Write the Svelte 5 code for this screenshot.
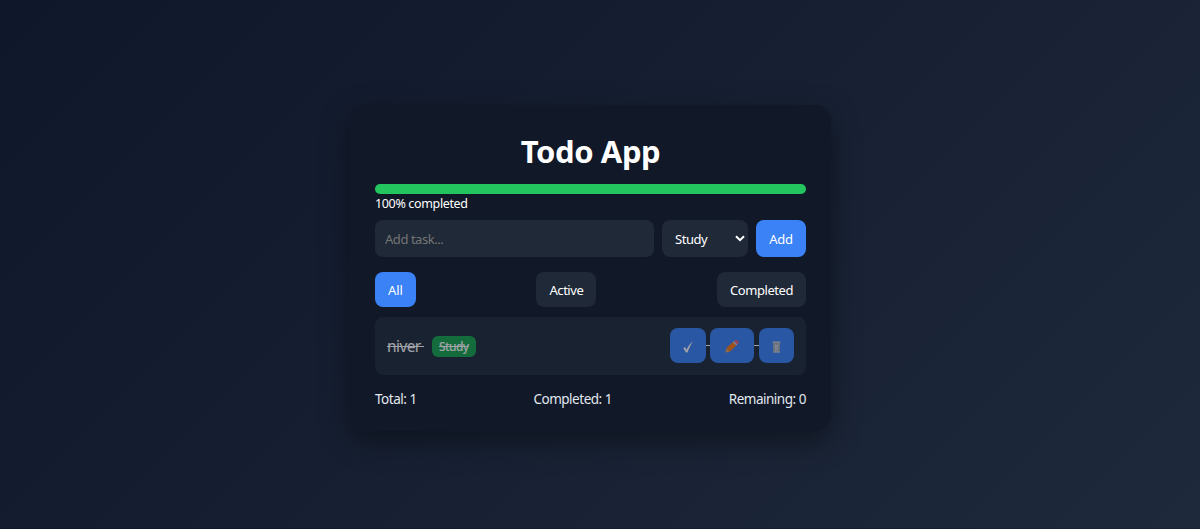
<script lang="ts">
  type Task = { id: number; text: string; category: string; done: boolean };

  let tasks: Task[] = $state([{ id: 1, text: "niver", category: "Study", done: true }]);
  let newTask = $state("");
  let category = $state("Study");
  let filter = $state("All");

  const filters = ["All", "Active", "Completed"];

  let completed = $derived(tasks.filter((t) => t.done).length);
  let progress = $derived(tasks.length ? Math.round((completed / tasks.length) * 100) : 0);
  let visible = $derived(
    tasks.filter((t) => filter === "All" || (filter === "Completed" ? t.done : !t.done))
  );

  function addTask() {
    if (!newTask.trim()) return;
    tasks.push({ id: Date.now(), text: newTask, category, done: false });
    newTask = "";
  }

  function editTask(task: Task) {
    const text = prompt("Edit task", task.text);
    if (text) task.text = text;
  }

  function deleteTask(id: number) {
    tasks = tasks.filter((t) => t.id !== id);
  }
</script>

<div class="page">
  <div class="container">
    <h1>Todo App</h1>

    <div class="progress">
      <div class="bar" style="width: {progress}%"></div>
    </div>
    <p class="percent">{progress}% completed</p>

    <div class="inputRow">
      <input bind:value={newTask} type="text" placeholder="Add task..." />
      <div class="selectBox">
        <select bind:value={category}>
          <option>Study</option>
          <option>Work</option>
          <option>Personal</option>
        </select>
        <svg width="10" height="7" viewBox="0 0 10 7"><path d="M1 1.2 L5 5.2 L9 1.2" /></svg>
      </div>
      <button class="add" onclick={addTask}>Add</button>
    </div>

    <div class="filters">
      {#each filters as name}
        <button class:active={filter === name} onclick={() => (filter = name)}>{name}</button>
      {/each}
    </div>

    <ul>
      {#each visible as task (task.id)}
        <li class:done={task.done}>
          <div class="label">
            <span class="name">{task.text}&nbsp;</span>
            <span class="tag">{task.category}</span>
          </div>
          <div class="actions">
            <button class="check" aria-label="Complete" onclick={() => (task.done = !task.done)}>
              <svg width="10" height="12" viewBox="0 0 10 12">
                <path d="M0.3 7.2 L2 6.1 L3.6 8.8 C5 5.3 6.8 2.6 9.8 0.4 C7.8 3.8 6 7 4.5 11.4 L3 11.4 Z" fill="#fff" />
              </svg>
            </button>
            <i></i>
            <button class="edit" aria-label="Edit" onclick={() => editTask(task)}>
              <svg width="14" height="13" viewBox="0 0 14 13">
                <path d="M0.4 12.6 L1.2 8.2 L4.8 11.8 Z" fill="#e0a060" />
                <path d="M1.2 8.2 L7.8 2 L11.3 5.6 L4.8 11.8 Z" fill="#ff7a14" />
                <path d="M7.8 2 L9 0.9 L12.4 4.5 L11.3 5.6 Z" fill="#c9ced6" />
                <path d="M9 0.9 Q10.8 -0.4 12.9 0.8 Q14.4 2.7 12.4 4.5 Z" fill="#ff5f6a" />
              </svg>
            </button>
            <i></i>
            <button class="remove" aria-label="Delete" onclick={() => deleteTask(task.id)}>
              <svg width="9" height="12" viewBox="0 0 9 12">
                <path d="M0.8 1 H8.2 L7.7 11.4 H1.3 Z" fill="#a4abb8" />
                <path d="M0.5 1 H8.5 M2.8 3.5 L6.2 6.5 L2.8 9.5 M6.2 3.5 L2.8 6.5 L6.2 9.5 M1.3 11 H7.7" fill="none" stroke="#e6e8ec" stroke-width="0.8" />
              </svg>
            </button>
          </div>
        </li>
      {/each}
    </ul>

    <div class="stats">
      <span>Total: {tasks.length}</span>
      <span>Completed: {completed}</span>
      <span>Remaining: {tasks.length - completed}</span>
    </div>
  </div>
</div>

<style>
  :global(body) {
    margin: 0;
    overflow: hidden;
  }
  .page {
    height: 529px;
    box-sizing: border-box;
    padding: 105px 0 0 350px;
    background: linear-gradient(135deg, #0f172a, #1e293b);
    background-size: 100% 528px;
    color: #fff;
    font-family: "Segoe UI", "Noto Sans", sans-serif;
  }
  .container {
    width: 481px;
    height: 326px;
    box-sizing: border-box;
    padding: 25px;
    border-radius: 16px;
    background: #111827;
    box-shadow: 0 10px 30px rgba(0, 0, 0, 0.4);
  }
  h1 {
    margin: 0 0 11px;
    height: 43px;
    line-height: 43px;
    text-align: center;
    font-size: 31px;
    font-weight: bold;
    letter-spacing: -0.4px;
  }
  .progress {
    height: 10px;
    border-radius: 10px;
    background: #1f2937;
    overflow: hidden;
  }
  .bar {
    height: 100%;
    background: #22c55e;
  }
  .percent {
    margin: 0 0 6px;
    line-height: 20px;
    font-size: 12.5px;
    letter-spacing: -0.35px;
  }
  input,
  select,
  button {
    box-sizing: border-box;
    border: 0;
    border-radius: 8px;
    color: #fff;
    background: #1f2937;
    font-family: inherit;
    font-size: 13px;
    letter-spacing: -0.45px;
  }
  .inputRow {
    display: flex;
    gap: 8px;
    height: 37px;
    margin-bottom: 15px;
  }
  input {
    flex: 1;
    min-width: 0;
    padding: 1px 10px;
  }
  input::placeholder {
    color: #757575;
  }
  .selectBox {
    display: grid;
    width: 86px;
  }
  .selectBox select,
  .selectBox svg {
    grid-area: 1 / 1;
  }
  .selectBox select {
    appearance: none;
    padding: 1px 13px 0;
  }
  .selectBox svg {
    align-self: center;
    justify-self: end;
    margin-right: 3px;
    pointer-events: none;
    fill: none;
    stroke: #fff;
    stroke-width: 2;
  }
  button {
    height: 35px;
    padding: 1px 0 0;
    cursor: pointer;
  }
  .add {
    width: 50px;
    height: 37px;
    letter-spacing: -0.2px;
    background: #3b82f6;
  }
  .filters {
    display: flex;
    justify-content: space-between;
    margin-bottom: 10px;
  }
  .filters button {
    padding: 1px 13px 0;
  }
  .filters .active {
    letter-spacing: -0.1px;
    background: #3b82f6;
  }
  ul {
    margin: 0 0 14px;
    padding: 0;
    list-style: none;
  }
  li {
    display: flex;
    justify-content: space-between;
    align-items: center;
    height: 58px;
    box-sizing: border-box;
    padding: 0 12px 1px;
    border-radius: 8px;
    background: #1f2937;
  }
  .done {
    opacity: 0.6;
  }
  .done .name,
  .done .tag {
    text-decoration: line-through;
  }
  .label {
    display: flex;
    align-items: center;
    gap: 8px;
  }
  .name {
    margin-top: 1px;
    font-size: 15.5px;
    letter-spacing: -0.6px;
  }
  .tag {
    margin-top: 2px;
    padding: 0 7px;
    height: 21px;
    line-height: 22px;
    border-radius: 6px;
    background: #16a34a;
    font-size: 12px;
    font-weight: 500;
    letter-spacing: -0.6px;
  }
  .actions {
    display: flex;
    align-items: center;
  }
  .actions button {
    display: flex;
    align-items: center;
    justify-content: center;
    padding-top: 2px;
    background: #3b82f6;
  }
  .check {
    width: 36px;
  }
  .edit {
    width: 44px;
  }
  .remove {
    width: 35px;
  }
  .actions i {
    width: 4px;
    height: 1px;
  }
  .edit + i {
    width: 5px;
  }
  .done .actions i {
    background: #fff;
  }
  .stats {
    display: flex;
    justify-content: space-between;
    line-height: 20px;
    font-size: 13.5px;
    color: #e2e8f0;
    letter-spacing: -0.48px;
  }
</style>
